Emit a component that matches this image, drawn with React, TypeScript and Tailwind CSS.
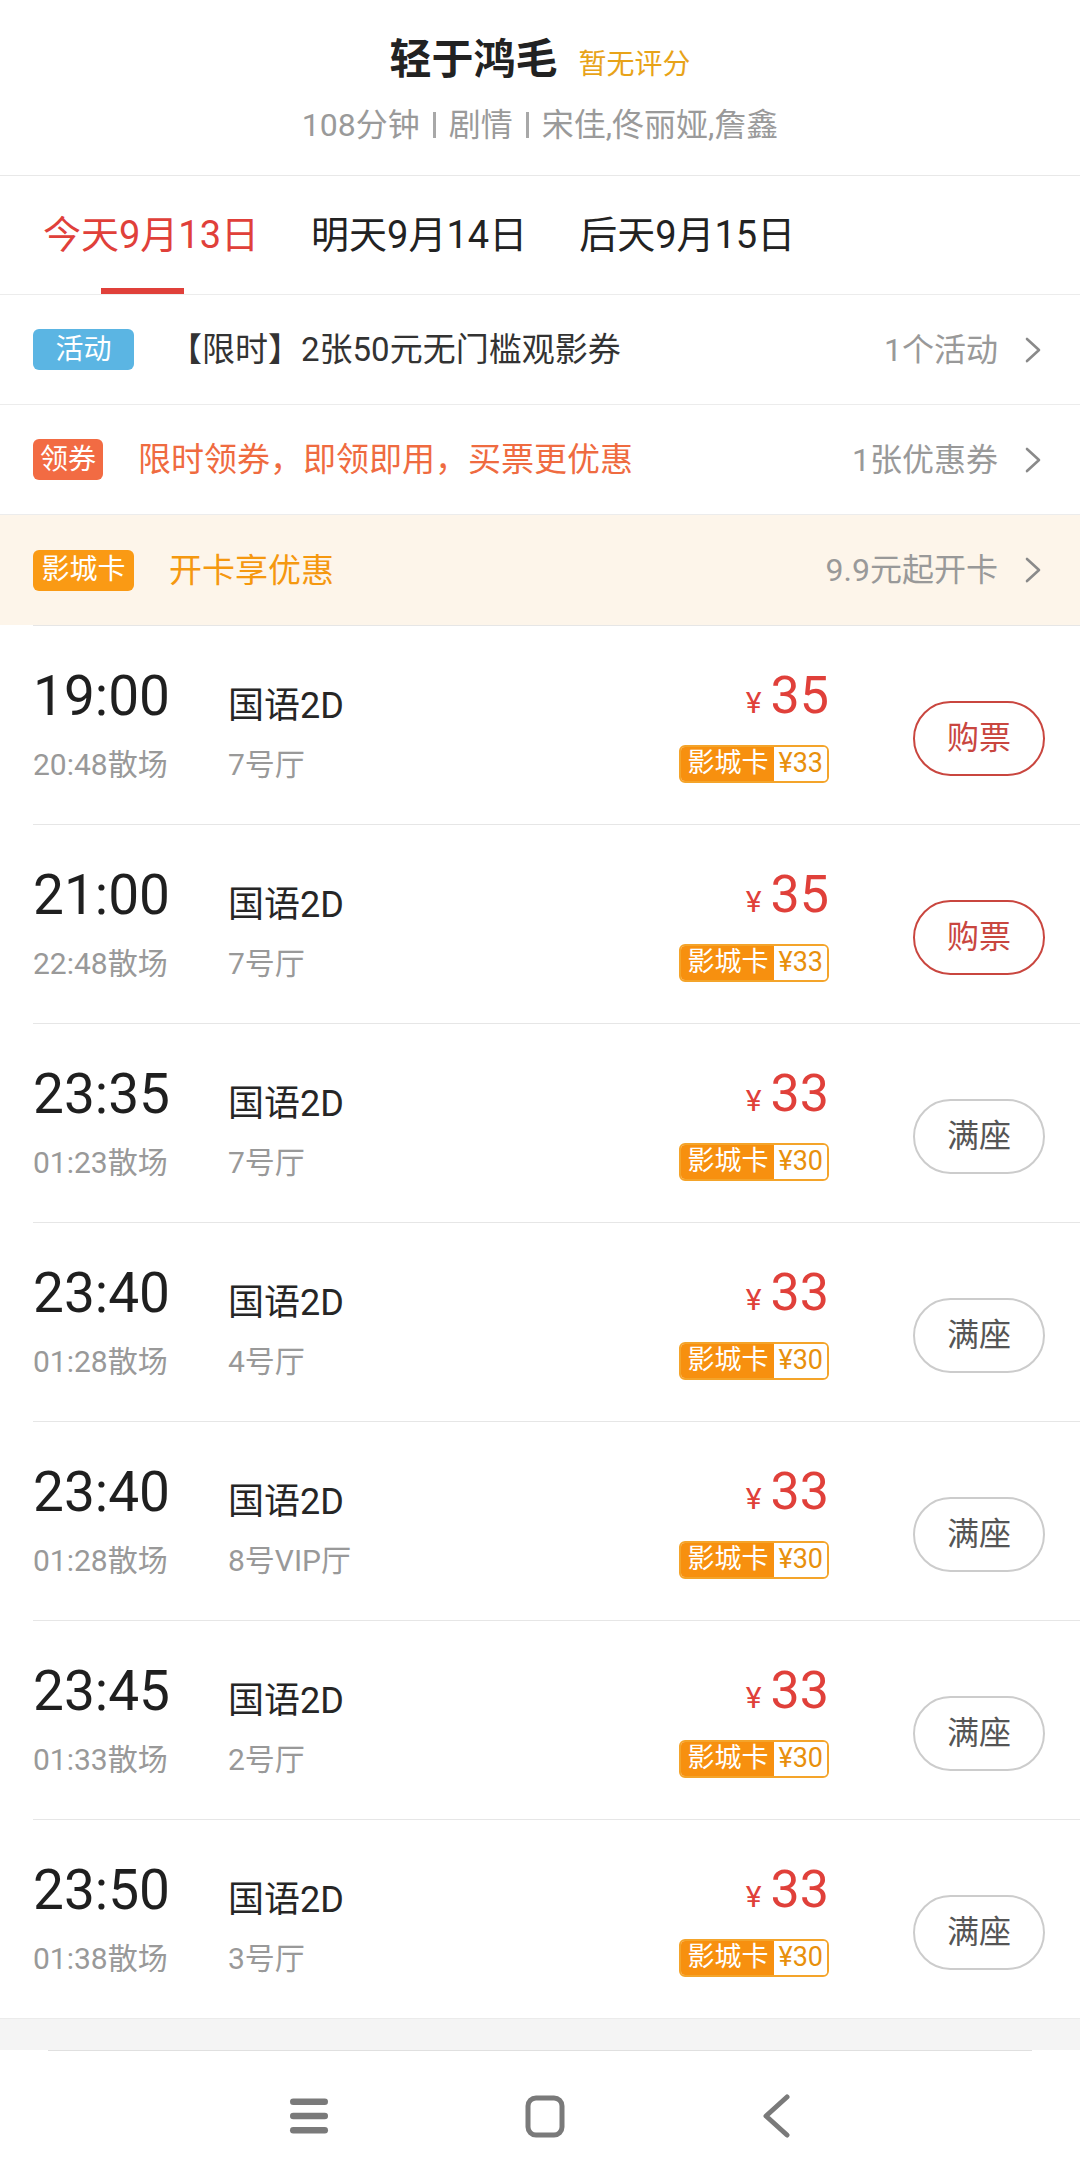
import React from "react";

const shows = [
  { start: "19:00", end: "20:48", lang: "国语2D", hall: "7号厅", price: 35, card: 33, full: false },
  { start: "21:00", end: "22:48", lang: "国语2D", hall: "7号厅", price: 35, card: 33, full: false },
  { start: "23:35", end: "01:23", lang: "国语2D", hall: "7号厅", price: 33, card: 30, full: true },
  { start: "23:40", end: "01:28", lang: "国语2D", hall: "4号厅", price: 33, card: 30, full: true },
  { start: "23:40", end: "01:28", lang: "国语2D", hall: "8号VIP厅", price: 33, card: 30, full: true },
  { start: "23:45", end: "01:33", lang: "国语2D", hall: "2号厅", price: 33, card: 30, full: true },
  { start: "23:50", end: "01:38", lang: "国语2D", hall: "3号厅", price: 33, card: 30, full: true },
];

function Chevron() {
  return (
    <svg width="18" height="26" viewBox="0 0 18 26" className="ml-[26px]">
      <polyline points="3,2 15,13 3,24" fill="none" stroke="#8a8a8a" strokeWidth="2.6" strokeLinecap="round" strokeLinejoin="round" />
    </svg>
  );
}

function PromoRow({
  badge,
  badgeClass,
  text,
  textClass,
  right,
  rowClass,
}: {
  badge: string;
  badgeClass: string;
  text: string;
  textClass: string;
  right: string;
  rowClass: string;
}) {
  return (
    <div className={`flex items-center h-[110px] pl-[33px] pr-[38px] ${rowClass}`}>
      <span className={`flex items-center justify-center h-[41px] rounded-[6px] text-white text-[28px] leading-none ${badgeClass}`}>
        {badge}
      </span>
      <span className={`ml-[35px] text-[33px] leading-none ${textClass}`}>{text}</span>
      <span className="ml-auto text-[32px] leading-none text-[#999999]">{right}</span>
      <Chevron />
    </div>
  );
}

function ShowRow({ s }: { s: (typeof shows)[number] }) {
  return (
    <div className="ml-[33px] border-t border-[#e6e6e6]">
      <div className="flex items-center h-[198px] pr-[35px]">
        <div className="flex flex-col mr-[58px]">
          <span className="text-[55px] leading-[60px] text-[#1f1f1f]">{s.start}</span>
          <span className="mt-[19px] text-[30px] leading-[40px] text-[#999999]">{s.end}散场</span>
        </div>
        <div className="flex flex-col h-[119px] pt-[20px]">
          <span className="text-[36px] leading-[41px] text-[#262626]">{s.lang}</span>
          <span className="mt-[18px] text-[30px] leading-[40px] text-[#999999]">{s.hall}</span>
        </div>
        <div className="ml-auto flex flex-col items-end">
          <div className="flex items-baseline h-[56px] leading-[56px] text-[#e0403a]">
            <span className="text-[30px] mr-[9px]">¥</span>
            <span className="text-[52px]">{s.price}</span>
          </div>
          <div className="mt-[21px] flex h-[38px] rounded-[6px] border-2 border-[#f4a42a] overflow-hidden text-[27px] leading-none">
            <span className="flex items-center bg-[#f7900f] text-white px-[6px]">影城卡</span>
            <span className="flex items-center bg-white text-[#e8900c] px-[4px]">¥{s.card}</span>
          </div>
        </div>
        {s.full ? (
          <button className="ml-[84px] mt-[26px] w-[132px] h-[75px] rounded-full border-2 border-[#cccccc] text-[32px] text-[#555555]">
            满座
          </button>
        ) : (
          <button className="ml-[84px] mt-[26px] w-[132px] h-[75px] rounded-full border-2 border-[#c9463f] text-[32px] text-[#c9463f]">
            购票
          </button>
        )}
      </div>
    </div>
  );
}

export default function App() {
  return (
    <div
      className="w-[1080px] h-[2181px] bg-white overflow-hidden flex flex-col"
      style={{ fontFamily: "Roboto, 'Noto Sans CJK SC', sans-serif" }}
    >
      <header className="h-[176px] border-b border-[#e8e8e8] pt-[35px] flex flex-col items-center">
        <div className="flex items-baseline h-[50px] leading-[50px]">
          <span className="text-[42px] font-semibold text-[#222222]">轻于鸿毛</span>
          <span className="ml-[21px] text-[28px] text-[#e8a318]">暂无评分</span>
        </div>
        <div className="mt-[20px] flex items-center text-[32px] leading-[40px] text-[#9a9a9a]">
          <span>108分钟</span>
          <span className="mx-[13px] w-[3px] h-[26px] bg-[#a8a8a8]" />
          <span>剧情</span>
          <span className="mx-[13px] w-[3px] h-[26px] bg-[#a8a8a8]" />
          <span>宋佳,佟丽娅,詹鑫</span>
        </div>
      </header>

      <nav className="h-[119px] border-b border-[#ececec] flex pl-[43px] gap-[52px]">
        {["今天9月13日", "明天9月14日", "后天9月15日"].map((d, i) => (
          <div key={d} className="relative flex items-center h-full">
            <span className={`text-[38px] leading-none ${i === 0 ? "text-[#e0403a]" : "text-[#222222]"}`}>{d}</span>
            {i === 0 && <span className="absolute bottom-0 left-[58px] w-[83px] h-[6px] bg-[#e0403a]" />}
          </div>
        ))}
      </nav>

      <PromoRow
        badge="活动"
        badgeClass="w-[101px] bg-[#5bb5e3]"
        text="【限时】2张50元无门槛观影券"
        textClass="text-[#333333]"
        right="1个活动"
        rowClass="border-b border-[#ececec]"
      />
      <PromoRow
        badge="领券"
        badgeClass="w-[70px] bg-[#f26b43]"
        text="限时领券，即领即用，买票更优惠"
        textClass="text-[#ef6b40]"
        right="1张优惠券"
        rowClass="border-b border-[#ececec]"
      />
      <PromoRow
        badge="影城卡"
        badgeClass="w-[101px] bg-[#fa9a14]"
        text="开卡享优惠"
        textClass="text-[#f5980f]"
        right="9.9元起开卡"
        rowClass="bg-[#fdf5ea]"
      />

      {shows.map((s, i) => (
        <ShowRow key={i} s={s} />
      ))}

      <div className="h-[32px] bg-[#f4f4f4] border-t border-[#ebebeb]" />

      <div className="flex-1 mx-[48px] border-t border-[#e0e0e0] flex items-center justify-center gap-[196px]">
        <svg width="40" height="38" viewBox="0 0 40 38">
          <rect x="1" y="1.5" width="38" height="6.5" rx="3.25" fill="#7a7a7a" />
          <rect x="1" y="15.75" width="38" height="6.5" rx="3.25" fill="#7a7a7a" />
          <rect x="1" y="30" width="38" height="6.5" rx="3.25" fill="#7a7a7a" />
        </svg>
        <svg width="40" height="43" viewBox="0 0 40 43">
          <rect x="3" y="3" width="34" height="37" rx="8" fill="none" stroke="#7a7a7a" strokeWidth="5" />
        </svg>
        <svg width="30" height="44" viewBox="0 0 30 44">
          <polyline points="26,3 5,22 26,41" fill="none" stroke="#7a7a7a" strokeWidth="5" strokeLinecap="round" strokeLinejoin="round" />
        </svg>
      </div>
    </div>
  );
}
